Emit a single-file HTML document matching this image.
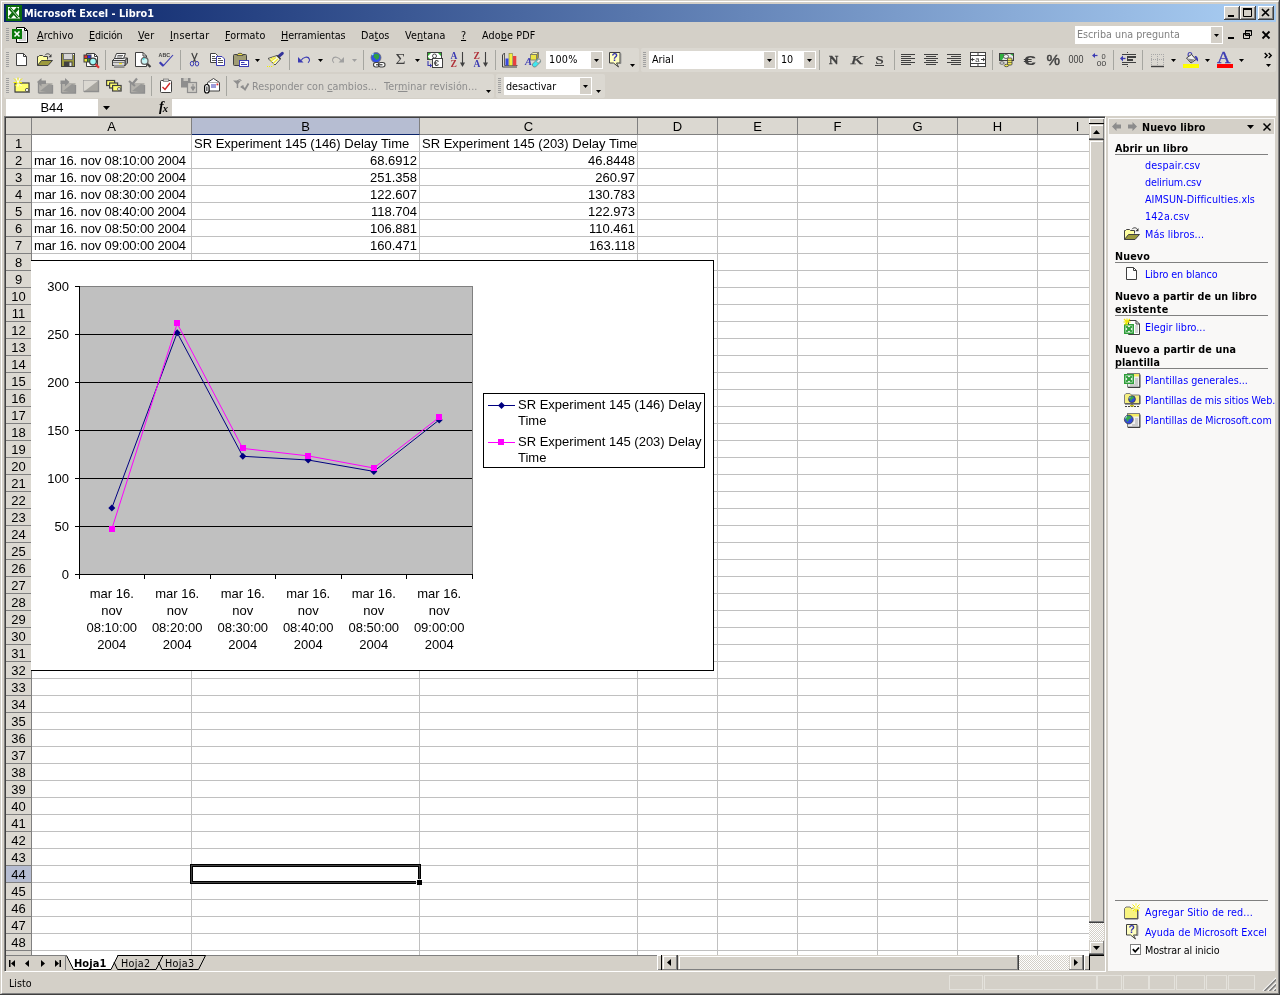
<!DOCTYPE html>
<html lang="es"><head><meta charset="utf-8"><title>Microsoft Excel - Libro1</title>
<style>
html,body{margin:0;padding:0;}
body{width:1280px;height:995px;overflow:hidden;background:#d4d0c8;font-family:'DejaVu Sans Condensed','DejaVu Sans','Liberation Sans',sans-serif;font-size:10.7px;color:#000;}
#win{will-change:transform;position:absolute;left:0;top:0;width:1280px;height:995px;background:#d4d0c8;overflow:hidden;}
.a{position:absolute;}
.t{position:absolute;white-space:nowrap;line-height:13px;height:13px;}
.b{font-weight:bold;}
u{text-decoration:underline;text-underline-offset:1px;}
.ar{font-family:'Liberation Sans',sans-serif;font-size:13px;}
svg{position:absolute;overflow:visible;}

</style></head>
<body>
<div id="win">
<!-- frame -->
<div class="a" style="left:0;top:0;width:1279px;height:994px;border-right:1px solid #404040;border-bottom:1px solid #404040;"></div>
<div class="a" style="left:1px;top:1px;width:1276px;height:991px;border-left:1px solid #fff;border-top:1px solid #fff;border-right:1px solid #808080;border-bottom:1px solid #808080;"></div>

<!-- title -->
<div class="a" style="left:4px;top:4px;width:1272px;height:18px;background:linear-gradient(to right,#0a246a 0%,#0a246a 2%,#a6caf0 97%,#a6caf0 100%);"></div>
<div class="t b" style="left:24px;top:7px;color:#fff;font-size:10.8px;letter-spacing:0.042px;">Microsoft Excel - Libro1</div>
<svg style="left:6px;top:5px" width="16" height="16" viewBox="0 0 16 16"><rect width="16" height="16" fill="#0b6b0b"/><rect x="2" y="2" width="11" height="11" fill="#fff"/><path d="M2 13h12" stroke="#fff" stroke-width="1"/><path d="M3.5 3l8.5 9.5M12 3l-8.5 9.5" stroke="#0b6b0b" stroke-width="3.2"/><path d="M4.5 3.5l7.5 8.5" stroke="#fff" stroke-width=".8"/></svg>
<!-- caption buttons -->
<div class="a" style="left:1224px;top:6px;width:16px;height:14px;background:#d4d0c8;box-shadow:inset -1px -1px 0 #404040,inset 1px 1px 0 #fff,inset -2px -2px 0 #808080;"></div>
<div class="a" style="left:1240px;top:6px;width:16px;height:14px;background:#d4d0c8;box-shadow:inset -1px -1px 0 #404040,inset 1px 1px 0 #fff,inset -2px -2px 0 #808080;"></div>
<div class="a" style="left:1258px;top:6px;width:16px;height:14px;background:#d4d0c8;box-shadow:inset -1px -1px 0 #404040,inset 1px 1px 0 #fff,inset -2px -2px 0 #808080;"></div>
<svg style="left:1224px;top:6px" width="50" height="14" viewBox="0 0 50 14"><path d="M4 10h6" stroke="#000" stroke-width="2"/><path d="M19.5 3.5h8v7h-8z" fill="none" stroke="#000"/><path d="M19 3h9" stroke="#000" stroke-width="2"/><path d="M38 3l7 7M45 3l-7 7" stroke="#000" stroke-width="1.7"/></svg>

<!-- menu -->
<svg style="left:6px;top:28px" width="4" height="14"><path d="M0 .5h3M0 2.5h3M0 4.5h3M0 6.5h3M0 8.5h3M0 10.5h3M0 12.5h3" stroke="#a0a0a0" stroke-width="1"/></svg>
<svg style="left:12px;top:27px" width="17" height="17" viewBox="0 0 17 17"><path d="M4.5 .5h8l3 3v12h-11z" fill="#fff" stroke="#000"/><path d="M12.5 .5v3h3" fill="none" stroke="#000"/><path d="M9 5h5M9 7h5M9 9h5M9 11h5M7 13h7" stroke="#b0b0b0"/><rect x=".5" y="2.5" width="9" height="9" fill="#0a7a0a" stroke="#0a7a0a"/><path d="M2.5 4.5l5 5M7.5 4.5l-5 5" stroke="#fff" stroke-width="1.6"/></svg>
<div class="t" style="left:37px;top:29px;letter-spacing:0.083px;"><u>A</u>rchivo</div>
<div class="t" style="left:89px;top:29px;letter-spacing:-0.185px;"><u>E</u>dición</div>
<div class="t" style="left:138px;top:29px;letter-spacing:0.292px;"><u>V</u>er</div>
<div class="t" style="left:170px;top:29px;letter-spacing:0.258px;"><u>I</u>nsertar</div>
<div class="t" style="left:225px;top:29px;letter-spacing:0.112px;"><u>F</u>ormato</div>
<div class="t" style="left:281px;top:29px;letter-spacing:-0.082px;"><u>H</u>erramientas</div>
<div class="t" style="left:361px;top:29px;letter-spacing:0.103px;">Da<u>t</u>os</div>
<div class="t" style="left:405px;top:29px;letter-spacing:0.152px;">Ve<u>n</u>tana</div>
<div class="t" style="left:461px;top:29px"><u>?</u></div>
<div class="t" style="left:482px;top:29px;letter-spacing:0.144px;">Ado<u>b</u>e PDF</div>
<div class="a" style="left:1075px;top:26px;width:148px;height:18px;background:#fff;"></div>
<div class="a" style="left:1211px;top:27px;width:11px;height:16px;background:#d4d0c8;"></div>
<svg style="left:1214px;top:34px" width="5" height="3"><path d="M0 0h5l-2.5 3z" fill="#000"/></svg>
<div class="t" style="left:1077px;top:28px;color:#808080">Escriba una pregunta</div>
<svg style="left:1228px;top:30px" width="46" height="12" viewBox="0 0 46 12"><path d="M0 8h6" stroke="#000" stroke-width="2"/><path d="M17.500 .5h6v5h-6zM15.500 3.500h6v5h-6z" fill="#d4d0c8" stroke="#000"/><path d="M17 1h7M15 4h7" stroke="#000" stroke-width="1"/><path d="M34.500 1.500l7 7M41.500 1.500l-7 7" stroke="#000" stroke-width="1.800"/></svg>

<div class="a" style="left:4px;top:48px;width:635px;height:24px;background:#dbd8d1;border-radius:2px;"></div>
<div class="a" style="left:641px;top:48px;width:635px;height:24px;background:#dbd8d1;border-radius:2px;"></div>
<div class="a" style="left:4px;top:74px;width:490px;height:24px;background:#dbd8d1;border-radius:2px;"></div>
<div class="a" style="left:496px;top:74px;width:109px;height:24px;background:#dbd8d1;border-radius:2px;"></div>
<svg style="left:6px;top:52px" width="3" height="16"><path d="M0 0.5h3M0 2.5h3M0 4.5h3M0 6.5h3M0 8.5h3M0 10.5h3M0 12.5h3M0 14.5h3" stroke="#a0a0a0"/></svg>
<svg style="left:643px;top:52px" width="3" height="16"><path d="M0 0.5h3M0 2.5h3M0 4.5h3M0 6.5h3M0 8.5h3M0 10.5h3M0 12.5h3M0 14.5h3" stroke="#a0a0a0"/></svg>
<svg style="left:6px;top:78px" width="3" height="16"><path d="M0 0.5h3M0 2.5h3M0 4.5h3M0 6.5h3M0 8.5h3M0 10.5h3M0 12.5h3M0 14.5h3" stroke="#a0a0a0"/></svg>
<svg style="left:498px;top:78px" width="3" height="16"><path d="M0 0.5h3M0 2.5h3M0 4.5h3M0 6.5h3M0 8.5h3M0 10.5h3M0 12.5h3M0 14.5h3" stroke="#a0a0a0"/></svg>
<svg style="left:14px;top:52px" width="16" height="16" viewBox="0 0 16 16"><path d="M2.5 1.5h7l3 3v9h-10z" fill="#fff" stroke="#404040"/><path d="M9.5 1.5v3h3" fill="none" stroke="#404040"/></svg>
<svg style="left:37px;top:52px" width="16" height="16" viewBox="0 0 16 16"><path d="M.5 13.5v-9h1l1-1h3l1 1h4v3" fill="#ffffa0" stroke="#404040"/><path d="M.5 13.5l4-5h11l-4.5 5z" fill="#9c9a3c" stroke="#404040"/><path d="M8 3.2c1.5-2 4.5-2 5.8.8" fill="none" stroke="#404040"/><path d="M14.5 2v3.2h-3.2z" fill="#404040"/></svg>
<svg style="left:60px;top:52px" width="16" height="16" viewBox="0 0 16 16"><rect x="1.5" y="1.5" width="13" height="13" fill="#9c9a3c" stroke="#404040"/><rect x="3.5" y="1.5" width="9" height="6" fill="#d6d6d6" stroke="#707070"/><rect x="4" y="9.5" width="8.5" height="5" fill="#404040"/><rect x="9.5" y="10.5" width="2" height="3.5" fill="#e8e8e8"/><rect x="13" y="2" width="1" height="1" fill="#fff"/></svg>
<svg style="left:83px;top:52px" width="16" height="16" viewBox="0 0 16 16"><path d="M3.5 1.5h8l3 3v10h-11z" fill="#fff" stroke="#404040"/><path d="M11.5 1.5v3h3" fill="none" stroke="#404040"/><rect x=".5" y="2.5" width="8" height="8" fill="#404040"/><rect x="1.5" y="3.5" width="2.5" height="2.5" fill="#e03030"/><rect x="5" y="3.5" width="2.5" height="2.5" fill="#3030e0"/><rect x="1.5" y="7" width="2.5" height="2.5" fill="#e8e830"/><rect x="5" y="7" width="2.5" height="2.5" fill="#30a030"/><circle cx="10" cy="9.6" r="3.4" fill="#a0f8f8" stroke="#404040" stroke-width="1.3"/><path d="M12.6 12.3l3.4 3.4" stroke="#e03030" stroke-width="2.2"/></svg>
<svg style="left:112px;top:52px" width="16" height="16" viewBox="0 0 16 16"><path d="M.5 8.500l2.500-2.500h12.500l-2.500 2.500z" fill="#ececec" stroke="#404040"/><path d="M4.500 1.500h9l-2 5h-9z" fill="#fff" stroke="#404040"/><path d="M5.500 3.500h5.500M4.800 5h5.500" stroke="#404040" stroke-width=".8"/><path d="M13 8.500l2.500-2.500v5l-2.500 2.500z" fill="#a4a4a4" stroke="#404040"/><rect x=".5" y="8.500" width="12.500" height="5" fill="#d6d6d6" stroke="#404040"/><path d="M1 10.500h11.500" stroke="#707070" stroke-width=".8"/><rect x="7" y="11" width="3" height="1.200" fill="#f0e020"/><rect x="2" y="13.500" width="10" height="1.500" fill="#f4f4f4"/><path d="M2 15h10.500" stroke="#404040"/></svg>
<svg style="left:135px;top:52px" width="16" height="16" viewBox="0 0 16 16"><path d="M.5 .5h7.500l3.500 3.500v10.500h-11z" fill="#fff" stroke="#404040"/><path d="M8 .5v3.500h3.500" fill="none" stroke="#404040"/><circle cx="9.600" cy="8.900" r="3.400" fill="#c8f4f4" stroke="#686868" stroke-width="1.300"/><path d="M8 7.500l1.500-1" stroke="#30e0e8" stroke-width="1.400"/><path d="M12.200 11.700l3.300 3.300" stroke="#404040" stroke-width="2.200"/></svg>
<svg style="left:158px;top:52px" width="16" height="16" viewBox="0 0 16 16"><text x=".6" y="5.400" font-family="Liberation Sans,sans-serif" font-weight="bold" font-size="6.200" textLength="11.500" lengthAdjust="spacingAndGlyphs" fill="#404040">ABC</text><path d="M1.700 10.300l3.600 3.600" stroke="#3b3bb3" stroke-width="2.200"/><path d="M5 14.200L15 3" stroke="#3b3bb3" stroke-width="1.100"/></svg>
<svg style="left:187px;top:52px" width="16" height="16" viewBox="0 0 16 16"><path d="M4.800 1L8.500 9.800M10.200 1L6.500 9.800" stroke="#404040" stroke-width="1.200" fill="none"/><ellipse cx="5" cy="11.700" rx="1.700" ry="2.300" fill="none" stroke="#3b3bb3" stroke-width="1"/><ellipse cx="10" cy="11.700" rx="1.700" ry="2.300" fill="none" stroke="#3b3bb3" stroke-width="1"/></svg>
<svg style="left:210px;top:52px" width="16" height="16" viewBox="0 0 16 16"><path d="M.5 1.500h5l2 2v7h-7z" fill="#fff" stroke="#404040"/><path d="M2 4.500h3M2 6.500h4M2 8.500h4" stroke="#404040" stroke-width=".9"/><path d="M6.500 4.500h5.500l2.500 2.500v6.500h-8z" fill="#fff" stroke="#3b3bb3"/><path d="M8 8.500h5M8 10.500h5M8 6.500h3" stroke="#404040" stroke-width=".9"/></svg>
<svg style="left:233px;top:52px" width="16" height="16" viewBox="0 0 16 16"><rect x=".5" y="2.500" width="13" height="11" rx="1" fill="#a09c74" stroke="#404040"/><path d="M4 3.500c0-3 6-3 6 0z" fill="#f0e040" stroke="#404040" stroke-width=".8"/><rect x="6.500" y="8.500" width="9" height="6" fill="#fff" stroke="#3b3bb3"/><path d="M8 10.500h3.500M8 12.500h6" stroke="#3b3bb3" stroke-width="1.100"/></svg>
<svg style="left:267px;top:52px" width="16" height="16" viewBox="0 0 16 16"><path d="M15.300 1.300l-3.800 3.400" stroke="#33339a" stroke-width="3" stroke-linecap="round"/><path d="M10 3.500l3.500 3.500-5.500 6-7-6.500z" fill="#fbfbe8" stroke="#404040" stroke-width=".9"/><path d="M9 5.500l-5.500 4M11 7l-5 4.500M7.500 5l-4.500 2.500" stroke="#f0e838" stroke-width="1.200"/><path d="M10 3.500l3.500 3.500" stroke="#404040" stroke-width="1.600"/><path d="M0 14.500h5.500l1.500-1.500" stroke="#f0f000" stroke-dasharray="1 1" fill="none"/></svg>
<svg style="left:296px;top:52px" width="16" height="16" viewBox="0 0 16 16"><path d="M2 5v5.500h5.500z" fill="#3b3bb3"/><path d="M5 8.500C7 5 12.200 3.700 13.400 7.200c.4 1.300-.2 2.800-1.400 3.600" fill="none" stroke="#3b3bb3" stroke-width="1.100"/></svg>
<svg style="left:330px;top:52px" width="16" height="16" viewBox="0 0 16 16"><g transform="translate(16,0) scale(-1,1)"><path d="M2 5v5.500h5.500z" fill="#a0a0a0"/><path d="M5 8.500C7 5 12.200 3.700 13.400 7.200c.4 1.300-.2 2.800-1.400 3.600" fill="none" stroke="#a0a0a0" stroke-width="1.100"/></g></svg>
<svg style="left:370px;top:52px" width="16" height="16" viewBox="0 0 16 16"><circle cx="6" cy="5.600" r="5" fill="#3050e8" stroke="#707070" stroke-width=".8"/><path d="M4 2.500c2-1.500 5-.5 5.500 1.500l-1 3-2.500 1-1-2-1.500-.5z" fill="#30a040"/><path d="M2 3l1.500-1.500" stroke="#a0f0f0" stroke-width="1.200"/><rect x="3.500" y="10.500" width="6" height="4.500" rx="2.200" fill="#fff" stroke="#404040" stroke-width="1.100"/><rect x="8.500" y="10.500" width="6.500" height="4.500" rx="2.200" fill="#fff" stroke="#404040" stroke-width="1.100"/><path d="M6 12.750h6.500" stroke="#404040" stroke-width="1.200"/></svg>
<svg style="left:393px;top:52px" width="16" height="16" viewBox="0 0 16 16"><text x="2.500" y="12.200" font-family="Liberation Serif,serif" font-size="13.800" textLength="10" lengthAdjust="spacingAndGlyphs" fill="#404040">Σ</text></svg>
<svg style="left:427px;top:52px" width="16" height="16" viewBox="0 0 16 16"><rect x=".5" y=".5" width="14" height="7" fill="#fff" stroke="#404040"/><path d="M1 1h3l-3 3zM14 1h-3l3 3zM1 7v-2l2 2z" fill="#30b030"/><circle cx="7.500" cy="4" r="2" fill="none" stroke="#404040" stroke-width=".9"/><rect x="5.500" y="6.500" width="10" height="9" fill="#fff" stroke="#404040"/><text x="6.800" y="14.300" font-family="Liberation Sans,sans-serif" font-weight="bold" font-size="9.500" fill="#404040">€</text><path d="M1 9v4.500h3" fill="none" stroke="#3b3bb3" stroke-width="1.100"/><path d="M3 11.500l2.200 2-2.200 2z" fill="#3b3bb3"/></svg>
<svg style="left:450px;top:52px" width="16" height="16" viewBox="0 0 16 16"><text x=".6" y="6.600" font-family="Liberation Serif,serif" font-weight="bold" font-size="9.500" fill="#3b3bb3">A</text><text x=".6" y="15" font-family="Liberation Serif,serif" font-weight="bold" font-size="9.500" fill="#b03038">Z</text><path d="M12.500 0v12" stroke="#404040" stroke-width="1.100"/><path d="M10 10.500h5l-2.500 4.500z" fill="#404040"/></svg>
<svg style="left:473px;top:52px" width="16" height="16" viewBox="0 0 16 16"><text x=".6" y="6.600" font-family="Liberation Serif,serif" font-weight="bold" font-size="9.500" fill="#b03038">Z</text><text x=".6" y="15" font-family="Liberation Serif,serif" font-weight="bold" font-size="9.500" fill="#3b3bb3">A</text><path d="M12.500 0v12" stroke="#404040" stroke-width="1.100"/><path d="M10 10.500h5l-2.500 4.500z" fill="#404040"/></svg>
<svg style="left:502px;top:52px" width="16" height="16" viewBox="0 0 16 16"><path d="M2.500 1l-2 2v12h14.500" fill="none" stroke="#404040"/><path d="M2.500 1v12.500h13" fill="none" stroke="#404040" stroke-width=".8"/><rect x="3.500" y="6.500" width="3" height="7" fill="#3848e0"/><rect x="7" y="1.500" width="3.300" height="12" fill="#f4f040" stroke="#707030" stroke-width=".5"/><rect x="11" y="4" width="3.300" height="9.500" fill="#e84040"/></svg>
<svg style="left:525px;top:52px" width="16" height="16" viewBox="0 0 16 16"><path d="M5.500 2.500l2.500-2h5.500l-2 2z" fill="#faf6a8" stroke="#707070" stroke-width=".8"/><path d="M11.500 2.500l2-2v5l-2 2.500z" fill="#a8a030" stroke="#707070" stroke-width=".8"/><rect x="5.500" y="2.500" width="6" height="5.500" fill="#ece444" stroke="#707070" stroke-width=".8"/><text x="0" y="13" font-family="Liberation Serif,serif" font-weight="bold" font-style="italic" font-size="10.500" fill="#3b3bb3">A</text><path d="M7.500 12l5-5c2.500-.5 3.500 1.500 3 3l-5 5c-2.500.5-3.500-1.500-3-3z" fill="#40e8f0" stroke="#707070" stroke-width=".7"/><ellipse cx="13.600" cy="9" rx="1.500" ry="2.200" transform="rotate(45 13.600 9)" fill="#e8e8e8" stroke="#808080" stroke-width=".6"/></svg>
<svg style="left:608px;top:52px" width="16" height="16" viewBox="0 0 16 16"><path d="M1.500 .5h10.500v10.500h-3.500l2 4-5-4h-4z" fill="#ffffc0" stroke="#404040" /><path d="M12.800 1.500v10h-2.500" fill="none" stroke="#808080"/><text x="3.600" y="9.300" font-family="Liberation Sans,sans-serif" font-weight="bold" font-size="10.500" fill="#3030b0">?</text></svg>
<div class="a" style="left:105px;top:50px;width:1px;height:20px;background:#a6a6a0;"></div>
<div class="a" style="left:180px;top:50px;width:1px;height:20px;background:#a6a6a0;"></div>
<div class="a" style="left:289px;top:50px;width:1px;height:20px;background:#a6a6a0;"></div>
<div class="a" style="left:363px;top:50px;width:1px;height:20px;background:#a6a6a0;"></div>
<div class="a" style="left:495px;top:50px;width:1px;height:20px;background:#a6a6a0;"></div>
<svg style="left:255px;top:59px" width="5" height="3"><path d="M0 0h5l-2.5 3z" fill="#000"/></svg>
<svg style="left:318px;top:59px" width="5" height="3"><path d="M0 0h5l-2.5 3z" fill="#000"/></svg>
<svg style="left:352px;top:59px" width="5" height="3"><path d="M0 0h5l-2.5 3z" fill="#a0a0a0"/></svg>
<svg style="left:415px;top:59px" width="5" height="3"><path d="M0 0h5l-2.5 3z" fill="#000"/></svg>
<svg style="left:630px;top:64px" width="5" height="3"><path d="M0 0h5l-2.5 3z" fill="#000"/></svg>
<div class="a" style="left:546px;top:51px;width:57px;height:18px;background:#fff;"></div><div class="a" style="left:591px;top:52px;width:11px;height:16px;background:#d4d0c8;"></div>
<svg style="left:594px;top:59px" width="5" height="3"><path d="M0 0h5l-2.5 3z" fill="#000"/></svg>
<div class="t" style="left:549px;top:53px;letter-spacing:0.275px;">100%</div>
<div class="a" style="left:649px;top:51px;width:127px;height:18px;background:#fff;"></div><div class="a" style="left:764px;top:52px;width:11px;height:16px;background:#d4d0c8;"></div>
<svg style="left:767px;top:59px" width="5" height="3"><path d="M0 0h5l-2.5 3z" fill="#000"/></svg>
<div class="t" style="left:652px;top:53px;letter-spacing:-0.033px;">Arial</div>
<div class="a" style="left:778px;top:51px;width:38px;height:18px;background:#fff;"></div><div class="a" style="left:804px;top:52px;width:11px;height:16px;background:#d4d0c8;"></div>
<svg style="left:807px;top:59px" width="5" height="3"><path d="M0 0h5l-2.5 3z" fill="#000"/></svg>
<div class="t" style="left:781px;top:53px;">10</div>
<div class="a" style="left:819px;top:50px;width:1px;height:20px;background:#a6a6a0;"></div>
<div class="a" style="left:894px;top:50px;width:1px;height:20px;background:#a6a6a0;"></div>
<div class="a" style="left:992px;top:50px;width:1px;height:20px;background:#a6a6a0;"></div>
<div class="a" style="left:1113px;top:50px;width:1px;height:20px;background:#a6a6a0;"></div>
<div class="a" style="left:1142px;top:50px;width:1px;height:20px;background:#a6a6a0;"></div>
<svg style="left:826px;top:52px" width="16" height="16" viewBox="0 0 16 16"><text x="3" y="12" font-family="Liberation Serif,serif" font-weight="bold" font-size="13" textLength="9.300" lengthAdjust="spacingAndGlyphs" fill="#404040" stroke="#404040" stroke-width=".35">N</text></svg>
<svg style="left:849px;top:52px" width="16" height="16" viewBox="0 0 16 16"><text x="1.800" y="12" font-family="Liberation Serif,serif" font-style="italic" font-size="13" textLength="12.500" lengthAdjust="spacingAndGlyphs" fill="#404040" stroke="#404040" stroke-width=".25">K</text></svg>
<svg style="left:872px;top:52px" width="16" height="16" viewBox="0 0 16 16"><text x="3.300" y="12" font-family="Liberation Serif,serif" font-weight="bold" font-size="13" textLength="8.500" lengthAdjust="spacingAndGlyphs" fill="#404040">S</text><path d="M3 13.500h9" stroke="#404040"/></svg>
<svg style="left:900px;top:52px" width="16" height="16" viewBox="0 0 16 16"><path d="M1 2.5H15M1 4.5H11M1 6.5H15M1 8.5H11M1 10.5H15M1 12.5H11" stroke="#404040"/></svg>
<svg style="left:923px;top:52px" width="16" height="16" viewBox="0 0 16 16"><path d="M1 2.5H15M3 4.5H13M1 6.5H15M3 8.5H13M1 10.5H15M3 12.5H13" stroke="#404040"/></svg>
<svg style="left:946px;top:52px" width="16" height="16" viewBox="0 0 16 16"><path d="M1 2.5H15M5 4.5H15M1 6.5H15M5 8.5H15M1 10.5H15M5 12.5H15" stroke="#404040"/></svg>
<svg style="left:969px;top:52px" width="16" height="16" viewBox="0 0 16 16"><rect x="1.500" y=".5" width="15" height="14" fill="#fff" stroke="#404040"/><path d="M1.500 3.500h15M1.500 11.500h15M9 .5v3M9 11.500v3" stroke="#404040"/><text x="6.200" y="10" font-family="Liberation Sans,sans-serif" font-size="7.500" fill="#404040">a</text><path d="M2 7.500h3.500M12 7.500h4" stroke="#404040"/><path d="M2 7.500l2-2v4zM16 7.500l-2-2v4z" fill="#404040"/></svg>
<svg style="left:999px;top:52px" width="16" height="16" viewBox="0 0 16 16"><rect x=".5" y="1.500" width="14" height="7" fill="#e8e8e8" stroke="#404040"/><path d="M1 2h4v3l-2 3h-2z" fill="#30b040"/><path d="M11 2h3v2z" fill="#30b040"/><ellipse cx="7" cy="4.500" rx="2.500" ry="2" fill="#f4f4f4" stroke="#404040" stroke-width=".8"/><rect x="8.500" y="6" width="4.500" height="7" rx="1" fill="#f0e850" stroke="#404040" stroke-width=".8"/><path d="M8.500 8.500h4.500M8.500 10.500h4.500" stroke="#404040" stroke-width=".6"/><ellipse cx="3" cy="11" rx="2.200" ry="1.200" fill="#f4f4f4" stroke="#404040" stroke-width=".8"/><ellipse cx="7.500" cy="13.500" rx="2.200" ry="1.200" fill="#f0e850" stroke="#404040" stroke-width=".8"/></svg>
<svg style="left:1022px;top:52px" width="16" height="16" viewBox="0 0 16 16"><text x="1.500" y="12.500" font-family="Liberation Sans,sans-serif" font-weight="bold" font-size="13.500" textLength="12.500" lengthAdjust="spacingAndGlyphs" fill="#404040">€</text></svg>
<svg style="left:1045px;top:52px" width="16" height="16" viewBox="0 0 16 16"><text x="1.500" y="13" font-family="Liberation Sans,sans-serif" font-size="14.500" textLength="13.500" lengthAdjust="spacingAndGlyphs" fill="#404040" stroke="#404040" stroke-width=".45">%</text></svg>
<svg style="left:1068px;top:52px" width="16" height="16" viewBox="0 0 16 16"><text x=".5" y="11.300" font-family="Liberation Sans,sans-serif" font-size="10.500" textLength="15" lengthAdjust="spacingAndGlyphs" fill="#404040">000</text></svg>
<svg style="left:1091px;top:52px" width="16" height="16" viewBox="0 0 16 16"><path d="M1 3.500l3-2.500v5z" fill="#3b3bb3"/><path d="M3.500 3.500h3" stroke="#3b3bb3" stroke-width="1.200"/><text x="10.500" y="6.500" font-family="Liberation Sans,sans-serif" font-size="7.500" fill="#404040">0</text><text x="5.800" y="14" font-family="Liberation Sans,sans-serif" font-size="7.500" textLength="9.500" lengthAdjust="spacingAndGlyphs" fill="#404040">00</text></svg>
<svg style="left:1120px;top:52px" width="16" height="16" viewBox="0 0 16 16"><path d="M7.500 0v16" stroke="#404040" stroke-dasharray="1 1"/><path d="M2 2.500h14M2 10.500h14M2 12.500h6" stroke="#404040"/><path d="M7 5h9M7 8h6" stroke="#404040" stroke-width="2"/><path d="M0 6.500l3-3v6z" fill="#3b3bb3"/><path d="M2.500 6.500h3" stroke="#3b3bb3" stroke-width="1.300"/></svg>
<svg style="left:1149px;top:52px" width="16" height="16" viewBox="0 0 16 16"><path d="M2.500 2v11M8.500 2v11M14.500 2v11M2 2.500h13M2 7.500h13" stroke="#a8a8a8" stroke-dasharray="1 1"/><path d="M2 14.500h13" stroke="#404040" stroke-width="1.400"/></svg>
<svg style="left:1183px;top:52px" width="16" height="16" viewBox="0 0 16 16"><path d="M6.500 5c-2.500-1.500-1.500-4.500.5-4.500s2 2 1.500 3.500" fill="none" stroke="#3b3bb3" stroke-width="1.100"/><path d="M3.500 6l5-3.500 4.500 5-5 3.500z" fill="#f4f4f4" stroke="#404040"/><path d="M4.500 6.500l7.500 1-4 2.800z" fill="#8c8c8c"/><path d="M12 4c2 0 3.500 2 3 5.500l-1.800-1.500c0-1.500-.8-2.500-1.700-3z" fill="#3b3bb3"/><rect x="0" y="12" width="16" height="4" fill="#ffff00"/></svg>
<svg style="left:1217px;top:52px" width="16" height="16" viewBox="0 0 16 16"><text x="0" y="10.800" font-family="Liberation Serif,serif" font-size="16" textLength="13.500" lengthAdjust="spacingAndGlyphs" fill="#3b3bb3" stroke="#3b3bb3" stroke-width=".3">A</text><rect x="0" y="12" width="16" height="4" fill="#ff0000"/></svg>
<svg style="left:1171px;top:59px" width="5" height="3"><path d="M0 0h5l-2.5 3z" fill="#000"/></svg>
<svg style="left:1205px;top:59px" width="5" height="3"><path d="M0 0h5l-2.5 3z" fill="#000"/></svg>
<svg style="left:1239px;top:59px" width="5" height="3"><path d="M0 0h5l-2.5 3z" fill="#000"/></svg>
<svg style="left:1266px;top:64px" width="5" height="3"><path d="M0 0h5l-2.5 3z" fill="#000"/></svg>
<svg style="left:1264px;top:53px" width="9" height="5"><path d="M.7 0l2.500 2.500-2.500 2.500M4.700 0l2.500 2.500-2.500 2.500" fill="none" stroke="#000" stroke-width="1.400"/></svg>
<svg style="left:14px;top:78px" width="16" height="16" viewBox="0 0 16 16"><rect x="1" y="5" width="14" height="9" fill="#ffff70" stroke="#404040" stroke-width="1.200"/><path d="M1 14.500h14.500v-9" fill="none" stroke="#707070"/><circle cx="13" cy="12" r="1.600" fill="#fff" stroke="#404040" stroke-width=".8"/><path d="M4 4.500l-4-4M4 4.500l4-4M4 4.500v-5M4 4.500h-4.500M4 4.500l-3 3.500M4 4.500h4" stroke="#f4f000" stroke-width="1"/><path d="M4 4.500l3.500 3.500M4 4.500v4M4 4.500l-2-4.500M4 4.500l2-4.500" stroke="#fff" stroke-width="1"/></svg>
<svg style="left:37px;top:78px" width="16" height="16" viewBox="0 0 16 16"><rect x="1.500" y="5" width="14" height="10" fill="#b4b2ac"/><path d="M1.500 15v-10M1.500 15h14v-8" fill="none" stroke="#8e8e8e" stroke-width="1.300"/><path d="M3 13l9-7 3 1v8z" fill="#8e8e8e" opacity=".75"/><path d="M0 4l4.500-4v2.500h4.500v3.500h-4.500v2.500z" fill="#8e8e8e"/></svg>
<svg style="left:60px;top:78px" width="16" height="16" viewBox="0 0 16 16"><rect x="1.500" y="5" width="14" height="10" fill="#b4b2ac"/><path d="M1.500 15v-10M1.500 15h14v-8" fill="none" stroke="#8e8e8e" stroke-width="1.300"/><path d="M3 13l9-7 3 1v8z" fill="#8e8e8e" opacity=".75"/><path d="M9.500 4l-4.500-4v2.500h-4.500v3.500h4.500v2.500z" fill="#8e8e8e"/></svg>
<svg style="left:83px;top:78px" width="16" height="16" viewBox="0 0 16 16"><path d="M.5 2.500h15M.5 2.500v11" fill="none" stroke="#8e8e8e" stroke-dasharray="1 1"/><path d="M1 13.500h14.500v-11z" fill="#a8a6a0"/><path d="M1 13.500h14.500v-11" fill="none" stroke="#8e8e8e" stroke-width="1.300"/></svg>
<svg style="left:106px;top:78px" width="16" height="16" viewBox="0 0 16 16"><rect x="0.6" y="2.5" width="8" height="5" fill="#ffff70" stroke="#404040" stroke-width="1.200"/><rect x="3.6" y="5" width="8" height="5" fill="#ffff70" stroke="#404040" stroke-width="1.200"/><rect x="6.6" y="7.5" width="8.5" height="5.5" fill="#ffff70" stroke="#404040" stroke-width="1.200"/><circle cx="13" cy="11" r="1.500" fill="#fff" stroke="#404040" stroke-width=".8"/></svg>
<svg style="left:129px;top:78px" width="16" height="16" viewBox="0 0 16 16"><rect x="1.500" y="5" width="14" height="10" fill="#b4b2ac"/><path d="M1.500 15v-10M1.500 15h14v-8" fill="none" stroke="#8e8e8e" stroke-width="1.300"/><path d="M3 13l9-7 3 1v8z" fill="#8e8e8e" opacity=".75"/><path d="M0 3l6 5M3 6.500l5-6" stroke="#8e8e8e" stroke-width="2.200"/></svg>
<svg style="left:158px;top:78px" width="16" height="16" viewBox="0 0 16 16"><rect x="2.500" y="2.500" width="11" height="12" rx="1" fill="#fff" stroke="#404040"/><rect x="5.500" y="1" width="5" height="2.500" fill="#d0d0d0" stroke="#707070" stroke-width=".7"/><path d="M4.500 9l2.500 2.500 5-6.500" fill="none" stroke="#d02828" stroke-width="1.400"/></svg>
<svg style="left:181px;top:78px" width="16" height="16" viewBox="0 0 16 16"><rect x="0" y="0" width="9.500" height="9.500" fill="#8e8e8e"/><rect x="2.500" y="0" width="4.500" height="3" fill="#c8c6c0"/><rect x="6.500" y="4.500" width="9" height="10" fill="#cfccc6" stroke="#8e8e8e" stroke-width="1.200"/><path d="M10 9h4l-2 3.500zM12 6v3" fill="#8e8e8e" stroke="#8e8e8e"/></svg>
<svg style="left:204px;top:78px" width="16" height="16" viewBox="0 0 16 16"><path d="M3.500 4.500l6-4 6 4v8.500h-12z" fill="#fff" stroke="#404040"/><path d="M3.500 4.500h12" stroke="#909090" stroke-width=".7"/><path d="M7 7h5M7 9h5" stroke="#3b3bb3" stroke-width="1.100"/><rect x="12.500" y="5.500" width="1.800" height="1.800" fill="#e03030"/><rect x=".6" y="6.500" width="4.500" height="8.500" rx="2.200" fill="#fff" stroke="#000" stroke-width="1.200"/><path d="M2.900 8.500v4.500" stroke="#000" stroke-width=".9"/></svg>
<svg style="left:233px;top:78px" width="16" height="16" viewBox="0 0 16 16"><path d="M0 2.500h8l-2.800 3.500v4h-1.500v-4z" fill="#8e8e8e"/><path d="M4 3l2.500-1.500 2 1" stroke="#8e8e8e" fill="none"/><path d="M8.500 8l3.500 3.500 3.500-6" fill="none" stroke="#8e8e8e" stroke-width="1.800"/><path d="M7 9l3.500-2v4z" fill="#8e8e8e"/></svg>
<div class="a" style="left:151px;top:76px;width:1px;height:20px;background:#a6a6a0;"></div>
<div class="a" style="left:226px;top:76px;width:1px;height:20px;background:#a6a6a0;"></div>
<div class="t" style="left:252px;top:80px;color:#8d8d8d;letter-spacing:0.044px;">Responder con <u>c</u>ambios...</div>
<div class="t" style="left:384px;top:80px;color:#8d8d8d;letter-spacing:0.095px;">Ter<u>m</u>inar revisión...</div>
<svg style="left:486px;top:90px" width="5" height="3"><path d="M0 0h5l-2.5 3z" fill="#000"/></svg>
<div class="a" style="left:504px;top:77px;width:88px;height:18px;background:#fff;"></div><div class="a" style="left:580px;top:78px;width:11px;height:16px;background:#d4d0c8;"></div>
<svg style="left:583px;top:85px" width="5" height="3"><path d="M0 0h5l-2.5 3z" fill="#000"/></svg>
<svg style="left:596px;top:90px" width="5" height="3"><path d="M0 0h5l-2.5 3z" fill="#000"/></svg>
<div class="t" style="left:506px;top:80px;">desactivar</div>
<!-- formula -->
<div class="a" style="left:6px;top:99px;width:92px;height:17px;background:#fff;"></div>
<div class="a" style="left:172px;top:99px;width:1104px;height:17px;background:#fff;"></div>
<div class="t ar" style="left:6px;top:99px;width:92px;text-align:center;line-height:17px;height:17px;">B44</div>
<svg style="left:103px;top:106px" width="7" height="4"><path d="M0 0h7l-3.500 4z" fill="#000"/></svg>
<div class="t" style="left:159px;top:99px;font-family:'Liberation Serif',serif;font-style:italic;font-weight:bold;font-size:14px;line-height:16px;height:16px;">f<span style="font-size:10.500px;position:relative;top:1px;left:-1px">x</span></div>

<div class="a" style="left:4px;top:116px;width:1101px;height:855px;background:#808080;"></div>
<div class="a" style="left:5px;top:117px;width:1101px;height:855px;background:#fff;"></div>
<div class="a" style="left:5px;top:117px;width:1100px;height:854px;background:#404040;"></div>
<div class="a" style="left:6px;top:118px;width:1099px;height:853px;background:#d4d0c8;"></div>
<div id="sheet" class="a" style="left:6px;top:118px;width:1083px;height:837px;background:#fff;overflow:hidden;">
<div class="a" style="left:185px;top:17px;width:1px;height:820px;background:#c0c0c0;"></div><div class="a" style="left:413px;top:17px;width:1px;height:820px;background:#c0c0c0;"></div><div class="a" style="left:631px;top:17px;width:1px;height:820px;background:#c0c0c0;"></div><div class="a" style="left:711px;top:17px;width:1px;height:820px;background:#c0c0c0;"></div><div class="a" style="left:791px;top:17px;width:1px;height:820px;background:#c0c0c0;"></div><div class="a" style="left:871px;top:17px;width:1px;height:820px;background:#c0c0c0;"></div><div class="a" style="left:951px;top:17px;width:1px;height:820px;background:#c0c0c0;"></div><div class="a" style="left:1031px;top:17px;width:1px;height:820px;background:#c0c0c0;"></div>
<div class="a" style="left:26px;top:33px;width:1057px;height:1px;background:#c0c0c0;"></div><div class="a" style="left:26px;top:50px;width:1057px;height:1px;background:#c0c0c0;"></div><div class="a" style="left:26px;top:67px;width:1057px;height:1px;background:#c0c0c0;"></div><div class="a" style="left:26px;top:84px;width:1057px;height:1px;background:#c0c0c0;"></div><div class="a" style="left:26px;top:101px;width:1057px;height:1px;background:#c0c0c0;"></div><div class="a" style="left:26px;top:118px;width:1057px;height:1px;background:#c0c0c0;"></div><div class="a" style="left:26px;top:135px;width:1057px;height:1px;background:#c0c0c0;"></div><div class="a" style="left:26px;top:152px;width:1057px;height:1px;background:#c0c0c0;"></div><div class="a" style="left:26px;top:169px;width:1057px;height:1px;background:#c0c0c0;"></div><div class="a" style="left:26px;top:186px;width:1057px;height:1px;background:#c0c0c0;"></div><div class="a" style="left:26px;top:203px;width:1057px;height:1px;background:#c0c0c0;"></div><div class="a" style="left:26px;top:220px;width:1057px;height:1px;background:#c0c0c0;"></div><div class="a" style="left:26px;top:237px;width:1057px;height:1px;background:#c0c0c0;"></div><div class="a" style="left:26px;top:254px;width:1057px;height:1px;background:#c0c0c0;"></div><div class="a" style="left:26px;top:271px;width:1057px;height:1px;background:#c0c0c0;"></div><div class="a" style="left:26px;top:288px;width:1057px;height:1px;background:#c0c0c0;"></div><div class="a" style="left:26px;top:305px;width:1057px;height:1px;background:#c0c0c0;"></div><div class="a" style="left:26px;top:322px;width:1057px;height:1px;background:#c0c0c0;"></div><div class="a" style="left:26px;top:339px;width:1057px;height:1px;background:#c0c0c0;"></div><div class="a" style="left:26px;top:356px;width:1057px;height:1px;background:#c0c0c0;"></div><div class="a" style="left:26px;top:373px;width:1057px;height:1px;background:#c0c0c0;"></div><div class="a" style="left:26px;top:390px;width:1057px;height:1px;background:#c0c0c0;"></div><div class="a" style="left:26px;top:407px;width:1057px;height:1px;background:#c0c0c0;"></div><div class="a" style="left:26px;top:424px;width:1057px;height:1px;background:#c0c0c0;"></div><div class="a" style="left:26px;top:441px;width:1057px;height:1px;background:#c0c0c0;"></div><div class="a" style="left:26px;top:458px;width:1057px;height:1px;background:#c0c0c0;"></div><div class="a" style="left:26px;top:475px;width:1057px;height:1px;background:#c0c0c0;"></div><div class="a" style="left:26px;top:492px;width:1057px;height:1px;background:#c0c0c0;"></div><div class="a" style="left:26px;top:509px;width:1057px;height:1px;background:#c0c0c0;"></div><div class="a" style="left:26px;top:526px;width:1057px;height:1px;background:#c0c0c0;"></div><div class="a" style="left:26px;top:543px;width:1057px;height:1px;background:#c0c0c0;"></div><div class="a" style="left:26px;top:560px;width:1057px;height:1px;background:#c0c0c0;"></div><div class="a" style="left:26px;top:577px;width:1057px;height:1px;background:#c0c0c0;"></div><div class="a" style="left:26px;top:594px;width:1057px;height:1px;background:#c0c0c0;"></div><div class="a" style="left:26px;top:611px;width:1057px;height:1px;background:#c0c0c0;"></div><div class="a" style="left:26px;top:628px;width:1057px;height:1px;background:#c0c0c0;"></div><div class="a" style="left:26px;top:645px;width:1057px;height:1px;background:#c0c0c0;"></div><div class="a" style="left:26px;top:662px;width:1057px;height:1px;background:#c0c0c0;"></div><div class="a" style="left:26px;top:679px;width:1057px;height:1px;background:#c0c0c0;"></div><div class="a" style="left:26px;top:696px;width:1057px;height:1px;background:#c0c0c0;"></div><div class="a" style="left:26px;top:713px;width:1057px;height:1px;background:#c0c0c0;"></div><div class="a" style="left:26px;top:730px;width:1057px;height:1px;background:#c0c0c0;"></div><div class="a" style="left:26px;top:747px;width:1057px;height:1px;background:#c0c0c0;"></div><div class="a" style="left:26px;top:764px;width:1057px;height:1px;background:#c0c0c0;"></div><div class="a" style="left:26px;top:781px;width:1057px;height:1px;background:#c0c0c0;"></div><div class="a" style="left:26px;top:798px;width:1057px;height:1px;background:#c0c0c0;"></div><div class="a" style="left:26px;top:815px;width:1057px;height:1px;background:#c0c0c0;"></div><div class="a" style="left:26px;top:832px;width:1057px;height:1px;background:#c0c0c0;"></div><div class="a" style="left:26px;top:849px;width:1057px;height:1px;background:#c0c0c0;"></div>
<div class="a" style="left:0;top:0;width:1083px;height:16px;background:#dbd8d1;border-bottom:1px solid #808080;"></div>
<div class="a" style="left:25px;top:0;width:1px;height:837px;background:#808080;"></div>
<div class="a ar" style="left:26px;top:0;width:159px;height:16px;border-right:1px solid #808080;text-align:center;line-height:17px;">A</div><div class="a ar" style="left:186px;top:0;width:227px;height:16px;background:#b6bdd2;border-bottom:1px solid #0a246a;border-right:1px solid #808080;text-align:center;line-height:17px;">B</div><div class="a ar" style="left:414px;top:0;width:217px;height:16px;border-right:1px solid #808080;text-align:center;line-height:17px;">C</div><div class="a ar" style="left:632px;top:0;width:79px;height:16px;border-right:1px solid #808080;text-align:center;line-height:17px;">D</div><div class="a ar" style="left:712px;top:0;width:79px;height:16px;border-right:1px solid #808080;text-align:center;line-height:17px;">E</div><div class="a ar" style="left:792px;top:0;width:79px;height:16px;border-right:1px solid #808080;text-align:center;line-height:17px;">F</div><div class="a ar" style="left:872px;top:0;width:79px;height:16px;border-right:1px solid #808080;text-align:center;line-height:17px;">G</div><div class="a ar" style="left:952px;top:0;width:79px;height:16px;border-right:1px solid #808080;text-align:center;line-height:17px;">H</div><div class="a ar" style="left:1032px;top:0;width:79px;height:16px;border-right:1px solid #808080;text-align:center;line-height:17px;">I</div>
<div class="a ar" style="left:0;top:17px;width:25px;height:16px;background:#dbd8d1;border-bottom:1px solid #808080;text-align:center;line-height:17px;">1</div><div class="a ar" style="left:0;top:34px;width:25px;height:16px;background:#dbd8d1;border-bottom:1px solid #808080;text-align:center;line-height:17px;">2</div><div class="a ar" style="left:0;top:51px;width:25px;height:16px;background:#dbd8d1;border-bottom:1px solid #808080;text-align:center;line-height:17px;">3</div><div class="a ar" style="left:0;top:68px;width:25px;height:16px;background:#dbd8d1;border-bottom:1px solid #808080;text-align:center;line-height:17px;">4</div><div class="a ar" style="left:0;top:85px;width:25px;height:16px;background:#dbd8d1;border-bottom:1px solid #808080;text-align:center;line-height:17px;">5</div><div class="a ar" style="left:0;top:102px;width:25px;height:16px;background:#dbd8d1;border-bottom:1px solid #808080;text-align:center;line-height:17px;">6</div><div class="a ar" style="left:0;top:119px;width:25px;height:16px;background:#dbd8d1;border-bottom:1px solid #808080;text-align:center;line-height:17px;">7</div><div class="a ar" style="left:0;top:136px;width:25px;height:16px;background:#dbd8d1;border-bottom:1px solid #808080;text-align:center;line-height:17px;">8</div><div class="a ar" style="left:0;top:153px;width:25px;height:16px;background:#dbd8d1;border-bottom:1px solid #808080;text-align:center;line-height:17px;">9</div><div class="a ar" style="left:0;top:170px;width:25px;height:16px;background:#dbd8d1;border-bottom:1px solid #808080;text-align:center;line-height:17px;">10</div><div class="a ar" style="left:0;top:187px;width:25px;height:16px;background:#dbd8d1;border-bottom:1px solid #808080;text-align:center;line-height:17px;">11</div><div class="a ar" style="left:0;top:204px;width:25px;height:16px;background:#dbd8d1;border-bottom:1px solid #808080;text-align:center;line-height:17px;">12</div><div class="a ar" style="left:0;top:221px;width:25px;height:16px;background:#dbd8d1;border-bottom:1px solid #808080;text-align:center;line-height:17px;">13</div><div class="a ar" style="left:0;top:238px;width:25px;height:16px;background:#dbd8d1;border-bottom:1px solid #808080;text-align:center;line-height:17px;">14</div><div class="a ar" style="left:0;top:255px;width:25px;height:16px;background:#dbd8d1;border-bottom:1px solid #808080;text-align:center;line-height:17px;">15</div><div class="a ar" style="left:0;top:272px;width:25px;height:16px;background:#dbd8d1;border-bottom:1px solid #808080;text-align:center;line-height:17px;">16</div><div class="a ar" style="left:0;top:289px;width:25px;height:16px;background:#dbd8d1;border-bottom:1px solid #808080;text-align:center;line-height:17px;">17</div><div class="a ar" style="left:0;top:306px;width:25px;height:16px;background:#dbd8d1;border-bottom:1px solid #808080;text-align:center;line-height:17px;">18</div><div class="a ar" style="left:0;top:323px;width:25px;height:16px;background:#dbd8d1;border-bottom:1px solid #808080;text-align:center;line-height:17px;">19</div><div class="a ar" style="left:0;top:340px;width:25px;height:16px;background:#dbd8d1;border-bottom:1px solid #808080;text-align:center;line-height:17px;">20</div><div class="a ar" style="left:0;top:357px;width:25px;height:16px;background:#dbd8d1;border-bottom:1px solid #808080;text-align:center;line-height:17px;">21</div><div class="a ar" style="left:0;top:374px;width:25px;height:16px;background:#dbd8d1;border-bottom:1px solid #808080;text-align:center;line-height:17px;">22</div><div class="a ar" style="left:0;top:391px;width:25px;height:16px;background:#dbd8d1;border-bottom:1px solid #808080;text-align:center;line-height:17px;">23</div><div class="a ar" style="left:0;top:408px;width:25px;height:16px;background:#dbd8d1;border-bottom:1px solid #808080;text-align:center;line-height:17px;">24</div><div class="a ar" style="left:0;top:425px;width:25px;height:16px;background:#dbd8d1;border-bottom:1px solid #808080;text-align:center;line-height:17px;">25</div><div class="a ar" style="left:0;top:442px;width:25px;height:16px;background:#dbd8d1;border-bottom:1px solid #808080;text-align:center;line-height:17px;">26</div><div class="a ar" style="left:0;top:459px;width:25px;height:16px;background:#dbd8d1;border-bottom:1px solid #808080;text-align:center;line-height:17px;">27</div><div class="a ar" style="left:0;top:476px;width:25px;height:16px;background:#dbd8d1;border-bottom:1px solid #808080;text-align:center;line-height:17px;">28</div><div class="a ar" style="left:0;top:493px;width:25px;height:16px;background:#dbd8d1;border-bottom:1px solid #808080;text-align:center;line-height:17px;">29</div><div class="a ar" style="left:0;top:510px;width:25px;height:16px;background:#dbd8d1;border-bottom:1px solid #808080;text-align:center;line-height:17px;">30</div><div class="a ar" style="left:0;top:527px;width:25px;height:16px;background:#dbd8d1;border-bottom:1px solid #808080;text-align:center;line-height:17px;">31</div><div class="a ar" style="left:0;top:544px;width:25px;height:16px;background:#dbd8d1;border-bottom:1px solid #808080;text-align:center;line-height:17px;">32</div><div class="a ar" style="left:0;top:561px;width:25px;height:16px;background:#dbd8d1;border-bottom:1px solid #808080;text-align:center;line-height:17px;">33</div><div class="a ar" style="left:0;top:578px;width:25px;height:16px;background:#dbd8d1;border-bottom:1px solid #808080;text-align:center;line-height:17px;">34</div><div class="a ar" style="left:0;top:595px;width:25px;height:16px;background:#dbd8d1;border-bottom:1px solid #808080;text-align:center;line-height:17px;">35</div><div class="a ar" style="left:0;top:612px;width:25px;height:16px;background:#dbd8d1;border-bottom:1px solid #808080;text-align:center;line-height:17px;">36</div><div class="a ar" style="left:0;top:629px;width:25px;height:16px;background:#dbd8d1;border-bottom:1px solid #808080;text-align:center;line-height:17px;">37</div><div class="a ar" style="left:0;top:646px;width:25px;height:16px;background:#dbd8d1;border-bottom:1px solid #808080;text-align:center;line-height:17px;">38</div><div class="a ar" style="left:0;top:663px;width:25px;height:16px;background:#dbd8d1;border-bottom:1px solid #808080;text-align:center;line-height:17px;">39</div><div class="a ar" style="left:0;top:680px;width:25px;height:16px;background:#dbd8d1;border-bottom:1px solid #808080;text-align:center;line-height:17px;">40</div><div class="a ar" style="left:0;top:697px;width:25px;height:16px;background:#dbd8d1;border-bottom:1px solid #808080;text-align:center;line-height:17px;">41</div><div class="a ar" style="left:0;top:714px;width:25px;height:16px;background:#dbd8d1;border-bottom:1px solid #808080;text-align:center;line-height:17px;">42</div><div class="a ar" style="left:0;top:731px;width:25px;height:16px;background:#dbd8d1;border-bottom:1px solid #808080;text-align:center;line-height:17px;">43</div><div class="a ar" style="left:0;top:748px;width:25px;height:16px;background:#b6bdd2;border-bottom:1px solid #808080;text-align:center;line-height:17px;">44</div><div class="a ar" style="left:0;top:765px;width:25px;height:16px;background:#dbd8d1;border-bottom:1px solid #808080;text-align:center;line-height:17px;">45</div><div class="a ar" style="left:0;top:782px;width:25px;height:16px;background:#dbd8d1;border-bottom:1px solid #808080;text-align:center;line-height:17px;">46</div><div class="a ar" style="left:0;top:799px;width:25px;height:16px;background:#dbd8d1;border-bottom:1px solid #808080;text-align:center;line-height:17px;">47</div><div class="a ar" style="left:0;top:816px;width:25px;height:16px;background:#dbd8d1;border-bottom:1px solid #808080;text-align:center;line-height:17px;">48</div><div class="a ar" style="left:0;top:833px;width:25px;height:16px;background:#dbd8d1;border-bottom:1px solid #808080;text-align:center;line-height:17px;">49</div>
<div class="t ar" style="left:188px;top:17px;line-height:17px;height:17px;">SR Experiment 145 (146) Delay Time</div><div class="t ar" style="left:416px;top:17px;line-height:17px;height:17px;">SR Experiment 145 (203) Delay Time</div>
<div class="t ar" style="left:28px;top:34px;line-height:17px;height:17px;letter-spacing:-0.14px;">mar 16. nov 08:10:00 2004</div><div class="t ar" style="left:186px;width:225px;text-align:right;top:34px;line-height:17px;height:17px;">68.6912</div><div class="t ar" style="left:414px;width:215px;text-align:right;top:34px;line-height:17px;height:17px;">46.8448</div>
<div class="t ar" style="left:28px;top:51px;line-height:17px;height:17px;letter-spacing:-0.14px;">mar 16. nov 08:20:00 2004</div><div class="t ar" style="left:186px;width:225px;text-align:right;top:51px;line-height:17px;height:17px;">251.358</div><div class="t ar" style="left:414px;width:215px;text-align:right;top:51px;line-height:17px;height:17px;">260.97</div>
<div class="t ar" style="left:28px;top:68px;line-height:17px;height:17px;letter-spacing:-0.14px;">mar 16. nov 08:30:00 2004</div><div class="t ar" style="left:186px;width:225px;text-align:right;top:68px;line-height:17px;height:17px;">122.607</div><div class="t ar" style="left:414px;width:215px;text-align:right;top:68px;line-height:17px;height:17px;">130.783</div>
<div class="t ar" style="left:28px;top:85px;line-height:17px;height:17px;letter-spacing:-0.14px;">mar 16. nov 08:40:00 2004</div><div class="t ar" style="left:186px;width:225px;text-align:right;top:85px;line-height:17px;height:17px;">118.704</div><div class="t ar" style="left:414px;width:215px;text-align:right;top:85px;line-height:17px;height:17px;">122.973</div>
<div class="t ar" style="left:28px;top:102px;line-height:17px;height:17px;letter-spacing:-0.14px;">mar 16. nov 08:50:00 2004</div><div class="t ar" style="left:186px;width:225px;text-align:right;top:102px;line-height:17px;height:17px;">106.881</div><div class="t ar" style="left:414px;width:215px;text-align:right;top:102px;line-height:17px;height:17px;">110.461</div>
<div class="t ar" style="left:28px;top:119px;line-height:17px;height:17px;letter-spacing:-0.14px;">mar 16. nov 09:00:00 2004</div><div class="t ar" style="left:186px;width:225px;text-align:right;top:119px;line-height:17px;height:17px;">160.471</div><div class="t ar" style="left:414px;width:215px;text-align:right;top:119px;line-height:17px;height:17px;">163.118</div>
<div class="a" style="left:184px;top:746px;width:231px;height:3px;background:#000;"></div><div class="a" style="left:184px;top:746px;width:3px;height:20px;background:#000;"></div><div class="a" style="left:184px;top:763px;width:226px;height:3px;background:#000;"></div><div class="a" style="left:412px;top:746px;width:3px;height:15px;background:#000;"></div><div class="a" style="left:411px;top:762px;width:5px;height:5px;background:#000;"></div>
<div class="a" style="left:185px;top:747px;width:229px;height:1px;background:#3f3f3f;"></div><div class="a" style="left:185px;top:747px;width:1px;height:18px;background:#3f3f3f;"></div><div class="a" style="left:185px;top:764px;width:225px;height:1px;background:#3f3f3f;"></div><div class="a" style="left:413px;top:747px;width:1px;height:14px;background:#3f3f3f;"></div>
<svg style="left:0;top:0" width="1083" height="837" viewBox="6 118 1083 837" font-family="Liberation Sans,sans-serif" font-size="13" shape-rendering="crispEdges">
<rect x="31" y="260" width="683" height="411" fill="#fff"/>
<path d="M31 260.500H713.500V670.500H31" fill="none" stroke="#000"/>
<rect x="79.500" y="286.500" width="393" height="288" fill="#c0c0c0" stroke="#808080"/>
<path d="M80 334.500H472" stroke="#000"/>
<path d="M80 382.500H472" stroke="#000"/>
<path d="M80 430.500H472" stroke="#000"/>
<path d="M80 478.500H472" stroke="#000"/>
<path d="M80 526.500H472" stroke="#000"/>
<path d="M79.500 286V579M75 574.500H473" stroke="#000" fill="none"/>
<path d="M75 286.500H80" stroke="#000"/>
<path d="M75 334.500H80" stroke="#000"/>
<path d="M75 382.500H80" stroke="#000"/>
<path d="M75 430.500H80" stroke="#000"/>
<path d="M75 478.500H80" stroke="#000"/>
<path d="M75 526.500H80" stroke="#000"/>
<path d="M144.500 574V579" stroke="#000"/>
<path d="M210.500 574V579" stroke="#000"/>
<path d="M275.500 574V579" stroke="#000"/>
<path d="M341.500 574V579" stroke="#000"/>
<path d="M406.500 574V579" stroke="#000"/>
<path d="M472.500 574V579" stroke="#000"/>
<text x="69" y="291" text-anchor="end">300</text>
<text x="69" y="339" text-anchor="end">250</text>
<text x="69" y="387" text-anchor="end">200</text>
<text x="69" y="435" text-anchor="end">150</text>
<text x="69" y="483" text-anchor="end">100</text>
<text x="69" y="531" text-anchor="end">50</text>
<text x="69" y="579" text-anchor="end">0</text>
<text x="111.8" y="598" text-anchor="middle">mar 16.</text>
<text x="111.8" y="615" text-anchor="middle">nov</text>
<text x="111.8" y="632" text-anchor="middle">08:10:00</text>
<text x="111.8" y="649" text-anchor="middle">2004</text>
<text x="177.2" y="598" text-anchor="middle">mar 16.</text>
<text x="177.2" y="615" text-anchor="middle">nov</text>
<text x="177.2" y="632" text-anchor="middle">08:20:00</text>
<text x="177.2" y="649" text-anchor="middle">2004</text>
<text x="242.8" y="598" text-anchor="middle">mar 16.</text>
<text x="242.8" y="615" text-anchor="middle">nov</text>
<text x="242.8" y="632" text-anchor="middle">08:30:00</text>
<text x="242.8" y="649" text-anchor="middle">2004</text>
<text x="308.2" y="598" text-anchor="middle">mar 16.</text>
<text x="308.2" y="615" text-anchor="middle">nov</text>
<text x="308.2" y="632" text-anchor="middle">08:40:00</text>
<text x="308.2" y="649" text-anchor="middle">2004</text>
<text x="373.8" y="598" text-anchor="middle">mar 16.</text>
<text x="373.8" y="615" text-anchor="middle">nov</text>
<text x="373.8" y="632" text-anchor="middle">08:50:00</text>
<text x="373.8" y="649" text-anchor="middle">2004</text>
<text x="439.2" y="598" text-anchor="middle">mar 16.</text>
<text x="439.2" y="615" text-anchor="middle">nov</text>
<text x="439.2" y="632" text-anchor="middle">09:00:00</text>
<text x="439.2" y="649" text-anchor="middle">2004</text>
<polyline points="111.8,508.1 177.2,332.7 242.8,456.3 308.2,460.0 373.8,471.4 439.2,419.9" fill="none" stroke="#000080" stroke-width="1" shape-rendering="auto"/>
<path d="M111.8 504.6l3.500 3.500-3.500 3.500-3.500-3.500z" fill="#000080" shape-rendering="auto"/>
<path d="M177.2 329.2l3.500 3.500-3.500 3.500-3.500-3.500z" fill="#000080" shape-rendering="auto"/>
<path d="M242.8 452.8l3.500 3.500-3.500 3.500-3.500-3.500z" fill="#000080" shape-rendering="auto"/>
<path d="M308.2 456.5l3.500 3.500-3.500 3.500-3.500-3.500z" fill="#000080" shape-rendering="auto"/>
<path d="M373.8 467.9l3.500 3.500-3.500 3.500-3.500-3.500z" fill="#000080" shape-rendering="auto"/>
<path d="M439.2 416.4l3.500 3.500-3.500 3.500-3.500-3.500z" fill="#000080" shape-rendering="auto"/>
<polyline points="111.8,529.0 177.2,323.5 242.8,448.4 308.2,455.9 373.8,468.0 439.2,417.4" fill="none" stroke="#ff00ff" stroke-width="1" shape-rendering="auto"/>
<rect x="109" y="526" width="6" height="6" fill="#ff00ff"/>
<rect x="174" y="320" width="6" height="6" fill="#ff00ff"/>
<rect x="240" y="445" width="6" height="6" fill="#ff00ff"/>
<rect x="305" y="453" width="6" height="6" fill="#ff00ff"/>
<rect x="371" y="465" width="6" height="6" fill="#ff00ff"/>
<rect x="436" y="414" width="6" height="6" fill="#ff00ff"/>
<rect x="483.500" y="393.500" width="221" height="74" fill="#fff" stroke="#000"/>
<path d="M488 405.500H515" stroke="#000080"/><path d="M501.500 402l3.500 3.500-3.500 3.500-3.500-3.500z" fill="#000080" shape-rendering="auto"/>
<path d="M488 442.500H515" stroke="#ff00ff"/><rect x="498" y="439" width="6" height="6" fill="#ff00ff"/>
<text x="518" y="409">SR Experiment 145 (146) Delay</text><text x="518" y="425">Time</text>
<text x="518" y="446">SR Experiment 145 (203) Delay</text><text x="518" y="462">Time</text>
</svg>
</div>
<div class="a" style="left:1089px;top:118px;width:15px;height:837px;background:repeating-conic-gradient(#fff 0 25%,#d4d0c8 0 50%) 0 0/2px 2px;"></div>
<div class="a" style="left:1089px;top:118px;width:15px;height:5px;background:#d4d0c8;box-shadow:inset 1px 1px 0 #fff,inset -1px 0 0 #808080;"></div>
<div class="a" style="left:1089px;top:123px;width:15px;height:1px;background:#000;"></div>
<div class="a" style="left:1089px;top:124px;width:15px;height:16px;background:#d4d0c8;box-shadow:inset 0 -1px 0 #404040,inset -1px 0 0 #808080,inset 0 -2px 0 #808080,inset 1px 1px 0 #d4d0c8,inset 2px 2px 0 #fff;"></div>
<svg style="left:1093px;top:130px" width="7" height="4"><path d="M0 4h7l-3.500-4z" fill="#000"/></svg>
<div class="a" style="left:1089px;top:140px;width:15px;height:783px;background:#d4d0c8;box-shadow:inset 0 -1px 0 #404040,inset -1px 0 0 #808080,inset 0 -2px 0 #808080,inset 1px 1px 0 #d4d0c8,inset 2px 2px 0 #fff;"></div>
<div class="a" style="left:1089px;top:941px;width:15px;height:14px;background:#d4d0c8;box-shadow:inset 0 -1px 0 #404040,inset -1px 0 0 #808080,inset 0 -2px 0 #808080,inset 1px 1px 0 #d4d0c8,inset 2px 2px 0 #fff;"></div>
<svg style="left:1093px;top:946px" width="7" height="4"><path d="M0 0h7l-3.500 4z" fill="#000"/></svg>
<div class="a" style="left:6px;top:955px;width:1098px;height:15px;background:#d4d0c8;"></div>
<div class="a" style="left:6px;top:955px;width:651px;height:1px;background:#808080;"></div>
<div class="a" style="left:65px;top:956px;width:1px;height:14px;background:#808080;"></div>
<svg style="left:6px;top:955px" width="60" height="15" viewBox="6 955 60 15"><g fill="#000"><rect x="9" y="960" width="1.500" height="7"/><path d="M15 960v7l-4-3.500z"/><path d="M29 960v7l-4-3.500z"/><path d="M41 960v7l4-3.500z"/><path d="M55 960v7l4-3.500z"/><rect x="59.500" y="960" width="1.500" height="7"/></g></svg>
<svg style="left:60px;top:954px" width="160" height="17" viewBox="60 954 160 17"><path d="M66 955h52l-7 14.500h-37.500z" fill="#fff"/><path d="M66.500 955.500l7 14h37.500l7-14" fill="none" stroke="#000"/><path d="M117.500 955.500H205.500M114 962l3.500 7.500h38.500l7-14M158.500 962l3.500 7.500h36.500l7-14" fill="none" stroke="#000"/></svg>
<div class="a" style="left:67px;top:954px;width:50px;height:1px;background:#fff;"></div>
<div class="t b" style="left:74px;top:957px;font-size:11px;letter-spacing:0.071px;">Hoja1</div>
<div class="t" style="left:121px;top:957px;letter-spacing:0.321px;">Hoja2</div>
<div class="t" style="left:165px;top:957px;letter-spacing:0.321px;">Hoja3</div>
<div class="a" style="left:657px;top:955px;width:432px;height:15px;background:repeating-conic-gradient(#fff 0 25%,#d4d0c8 0 50%) 0 0/2px 2px;"></div>
<div class="a" style="left:657px;top:955px;width:4px;height:15px;background:#d4d0c8;box-shadow:inset 1px 1px 0 #fff,inset 0 -1px 0 #808080;"></div>
<div class="a" style="left:661px;top:955px;width:1px;height:15px;background:#000;"></div>
<div class="a" style="left:662px;top:955px;width:16px;height:15px;background:#d4d0c8;box-shadow:inset -1px 0 0 #404040,inset 0 -1px 0 #808080,inset -2px 0 0 #808080,inset 1px 1px 0 #d4d0c8,inset 2px 2px 0 #fff;"></div>
<svg style="left:667px;top:959px" width="4" height="7"><path d="M4 0v7l-4-3.500z" fill="#000"/></svg>
<div class="a" style="left:678px;top:955px;width:341px;height:15px;background:#d4d0c8;box-shadow:inset -1px 0 0 #404040,inset 0 -1px 0 #808080,inset -2px 0 0 #808080,inset 1px 1px 0 #d4d0c8,inset 2px 2px 0 #fff;"></div>
<div class="a" style="left:1069px;top:955px;width:15px;height:15px;background:#d4d0c8;box-shadow:inset -1px 0 0 #404040,inset 0 -1px 0 #808080,inset -2px 0 0 #808080,inset 1px 1px 0 #d4d0c8,inset 2px 2px 0 #fff;"></div>
<svg style="left:1074px;top:959px" width="4" height="7"><path d="M0 0v7l4-3.500z" fill="#000"/></svg>
<div class="a" style="left:1084px;top:955px;width:5px;height:15px;background:#d4d0c8;box-shadow:inset 1px 1px 0 #fff,inset 0 -1px 0 #808080;"></div>
<div class="a" style="left:1089px;top:955px;width:15px;height:15px;background:#d4d0c8;border-left:1px solid #000;border-top:1px solid #000;box-sizing:border-box;"></div>
<div class="t" style="left:9px;top:977px;letter-spacing:-0.037px;">Listo</div>
<div class="a" style="left:949px;top:975px;width:32px;height:13px;border:1px solid #e4e2dc;"></div><div class="a" style="left:984px;top:975px;width:111px;height:13px;border:1px solid #e4e2dc;"></div><div class="a" style="left:1097px;top:975px;width:23px;height:13px;border:1px solid #e4e2dc;"></div><div class="a" style="left:1123px;top:975px;width:24px;height:13px;border:1px solid #e4e2dc;"></div><div class="a" style="left:1149px;top:975px;width:24px;height:13px;border:1px solid #e4e2dc;"></div><div class="a" style="left:1176px;top:975px;width:27px;height:13px;border:1px solid #e4e2dc;"></div><div class="a" style="left:1206px;top:975px;width:19px;height:13px;border:1px solid #e4e2dc;"></div><div class="a" style="left:1228px;top:975px;width:25px;height:13px;border:1px solid #e4e2dc;"></div>
<svg style="left:1262px;top:976px;overflow:hidden" width="14" height="15"><path d="M1 15L14 2M6 15L14 7M11 15L14 12" stroke="#fff" stroke-width="1.200"/><path d="M2.300 15.300L14.300 3.300M7.300 15.300L14.300 8.300M12.300 15.300L14.300 13.300" stroke="#808080" stroke-width="1.700"/></svg>
<div class="a" style="left:1108px;top:118px;width:167px;height:853px;background:#f9f8f7;"></div>
<div class="a" style="left:1109px;top:119px;width:165px;height:851px;background:#f9f8f7;"></div>
<div class="a" style="left:1109px;top:119px;width:165px;height:15px;background:#d4d0c8;"></div>
<svg style="left:1112px;top:122px" width="26" height="9" viewBox="0 0 26 9"><path d="M0 4.500l4.500-4.500v2.500h4.500v4h-4.500v2.500z" fill="#8c8c8c"/><path d="M25 4.500l-4.500-4.500v2.500h-4.500v4h4.500v2.500z" fill="#8c8c8c"/></svg>
<div class="t b" style="left:1142px;top:121px;font-size:10.7px;letter-spacing:0.094px;">Nuevo libro</div>
<svg style="left:1247px;top:125px" width="7" height="4"><path d="M0 0h7l-3.500 4z" fill="#000"/></svg>
<svg style="left:1263px;top:123px" width="8" height="8"><path d="M.5 .5l7 7M7.500 .5l-7 7" stroke="#000" stroke-width="1.500"/></svg>
<div class="t b" style="left:1115px;top:142px;font-size:10.7px;letter-spacing:0.063px;">Abrir un libro</div>
<div class="a" style="left:1115px;top:154px;width:153px;height:1px;background:#808080;"></div>
<div class="t" style="left:1145px;top:159px;color:#0000ff;letter-spacing:0.153px;">despair.csv</div>
<div class="t" style="left:1145px;top:176px;color:#0000ff;letter-spacing:-0.175px;">delirium.csv</div>
<div class="t" style="left:1145px;top:193px;color:#0000ff;letter-spacing:0.045px;">AIMSUN-Difficulties.xls</div>
<div class="t" style="left:1145px;top:210px;color:#0000ff;letter-spacing:0.177px;">142a.csv</div>
<div class="t" style="left:1145px;top:228px;color:#0000ff;letter-spacing:0.125px;">Más libros...</div>
<div class="t b" style="left:1115px;top:250px;font-size:10.7px;letter-spacing:0.141px;">Nuevo</div>
<div class="a" style="left:1115px;top:262px;width:153px;height:1px;background:#808080;"></div>
<div class="t" style="left:1145px;top:268px;color:#0000ff;letter-spacing:-0.085px;">Libro en blanco</div>
<div class="t b" style="left:1115px;top:290px;font-size:10.7px;letter-spacing:0.063px;">Nuevo a partir de un libro</div>
<div class="t b" style="left:1115px;top:303px;font-size:10.7px;letter-spacing:0.29px;">existente</div>
<div class="a" style="left:1115px;top:315px;width:153px;height:1px;background:#808080;"></div>
<div class="t" style="left:1145px;top:321px;color:#0000ff;">Elegir libro...</div>
<div class="t b" style="left:1115px;top:343px;font-size:10.7px;letter-spacing:0.119px;">Nuevo a partir de una</div>
<div class="t b" style="left:1115px;top:356px;font-size:10.7px;letter-spacing:0.057px;">plantilla</div>
<div class="a" style="left:1115px;top:368px;width:153px;height:1px;background:#808080;"></div>
<div class="t" style="left:1145px;top:374px;color:#0000ff;">Plantillas generales...</div>
<div class="t" style="left:1145px;top:394px;color:#0000ff;letter-spacing:-0.114px;">Plantillas de mis sitios Web.</div>
<div class="t" style="left:1145px;top:414px;color:#0000ff;letter-spacing:-0.07px;">Plantillas de Microsoft.com</div>
<div class="a" style="left:1115px;top:900px;width:153px;height:1px;background:#808080;"></div>
<div class="t" style="left:1145px;top:906px;color:#0000ff;letter-spacing:0.102px;">Agregar Sitio de red...</div>
<div class="t" style="left:1145px;top:926px;color:#0000ff;letter-spacing:0.085px;">Ayuda de Microsoft Excel</div>
<div class="t" style="left:1145px;top:944px;color:#000;letter-spacing:-0.135px;">Mostrar al inicio</div>
<svg style="left:1124px;top:226px" width="16" height="16" viewBox="0 0 16 16"><path d="M.5 13.500v-9h1l1-1h3l1 1h4v3" fill="#ffffa0" stroke="#404040"/><path d="M.5 13.500l4-5h11l-4.500 5z" fill="#9c9a3c" stroke="#404040"/><path d="M8 3.200c1.500-2 4.500-2 5.800.8" fill="none" stroke="#404040"/><path d="M14.500 2v3.200h-3.200z" fill="#404040"/></svg>
<svg style="left:1124px;top:266px" width="16" height="16" viewBox="0 0 16 16"><path d="M2.500 1.500h7l3 3v9h-10z" fill="#fff" stroke="#404040"/><path d="M9.500 1.500v3h3" fill="none" stroke="#404040"/></svg>
<svg style="left:1124px;top:319px" width="16" height="16" viewBox="0 0 16 16"><path d="M4.500 1.500h7.500l3.500 3.500v10.500h-11z" fill="#fff" stroke="#404040"/><path d="M12 1.500v3.500h3.500" fill="none" stroke="#404040"/><path d="M11 7h3M11 9h3M11 11h3M11 13h3" stroke="#b0b0b0"/><rect x="0.5" y="5.5" width="9" height="9" fill="#2f9e3a" stroke="#2f9e3a"/><rect x="1.5" y="6.5" width="7" height="7" fill="#fff"/><path d="M2.2 7.2l5.600 5.600M7.8 7.2l-5.600 5.600" stroke="#2f9e3a" stroke-width="2.200"/><path d="M3 3l-3-3M3 3l3-3M3 3v-3.500M3 3h-3.500M3 3l-2.500 3M3 3h3.500M3 3v3.500" stroke="#f0e800" stroke-width="1.100"/></svg>
<svg style="left:1124px;top:372px" width="16" height="16" viewBox="0 0 16 16"><rect x="3.500" y="1.500" width="12" height="13.500" fill="#f0f0f0" stroke="#808080"/><path d="M4 15.500h12v-13" fill="none" stroke="#404040"/><rect x="4" y="2" width="11" height="2.500" fill="#f4ec60"/><path d="M11 7h3M11 9h3M11 11h3M6 13h8" stroke="#a8a8a8"/><rect x="0.5" y="2.5" width="9" height="9" fill="#2f9e3a" stroke="#2f9e3a"/><rect x="1.5" y="3.5" width="7" height="7" fill="#fff"/><path d="M2.2 4.2l5.600 5.600M7.8 4.2l-5.600 5.600" stroke="#2f9e3a" stroke-width="2.200"/></svg>
<svg style="left:1124px;top:392px" width="16" height="16" viewBox="0 0 16 16"><path d="M.5 11.500v-8.500l1.500-1.500h4l1.500 1.500h8v8.500z" fill="#f6f080" stroke="#808080"/><path d="M1 12h15v-8.500" fill="none" stroke="#404040" /><circle cx="8" cy="7.2" r="3.4" fill="#3048e0" stroke="#404040" stroke-width=".8"/><g transform="translate(8,7.2) scale(0.850)"><path d="M-1.500-3c1.500-.8 3-.3 3.800 1l-.8 1.500-1.500.3-.5 1.700-1.200.5-.5-2-1.300-.8z" fill="#38a848"/><path d="M-3-1l1-2" stroke="#a8ecf0" stroke-width=".9"/></g><path d="M8 12v2" stroke="#404040"/><path d="M1 14.500h14" stroke="#404040" stroke-dasharray="2 1"/><rect x="6" y="13" width="4" height="1.500" fill="#c8c020"/></svg>
<svg style="left:1124px;top:412px" width="16" height="16" viewBox="0 0 16 16"><rect x="3.500" y="1.500" width="12" height="13.500" fill="#f0f0f0" stroke="#808080"/><path d="M4 15.500h12v-13" fill="none" stroke="#404040"/><rect x="4" y="2" width="11" height="2.500" fill="#f4ec60"/><path d="M11 7h3M11 9h3M11 11h3M8 13h6" stroke="#a8a8a8"/><circle cx="4.8" cy="7.5" r="4.4" fill="#3048e0" stroke="#404040" stroke-width=".8"/><g transform="translate(4.8,7.5) scale(1.100)"><path d="M-1.500-3c1.500-.8 3-.3 3.800 1l-.8 1.500-1.500.3-.5 1.700-1.200.5-.5-2-1.300-.8z" fill="#38a848"/><path d="M-3-1l1-2" stroke="#a8ecf0" stroke-width=".9"/></g></svg>
<svg style="left:1124px;top:904px" width="16" height="16" viewBox="0 0 16 16"><path d="M.5 14.500v-10l1.500-1.500h4l1.500 1.500h6v10z" fill="#f8f480" stroke="#707070"/><path d="M1 15h13v-10" fill="none" stroke="#404040" stroke-width=".8"/><path d="M12 4l-3.500-3.500M12 4l3.500-3.500M12 4v-4.500M12 4h-4M12 4h4M12 4l-3 3M12 4l3 3M12 4v4" stroke="#f4ec00" stroke-width="1"/><path d="M12 4l-1.500-4M12 4l1.500-4M12 4l-4 1.500M12 4l4 1.500" stroke="#fff" stroke-width=".8"/></svg>
<svg style="left:1125px;top:924px" width="16" height="16" viewBox="0 0 16 16"><path d="M1.500 .5h10.500v10.500h-3.500l2 4-5-4h-4z" fill="#ffffc0" stroke="#404040" /><path d="M12.800 1.500v10h-2.500" fill="none" stroke="#808080"/><text x="3.600" y="9.300" font-family="Liberation Sans,sans-serif" font-weight="bold" font-size="10.500" fill="#3030b0">?</text></svg>
<div class="a" style="left:1130px;top:944px;width:9px;height:9px;background:#fff;border:1px solid #808080;"></div>
<svg style="left:1132px;top:946px" width="8" height="8"><path d="M.8 3.200l2.400 2.500 3.800-4.200" fill="none" stroke="#000" stroke-width="1.700"/></svg>
</div>
</body></html>
